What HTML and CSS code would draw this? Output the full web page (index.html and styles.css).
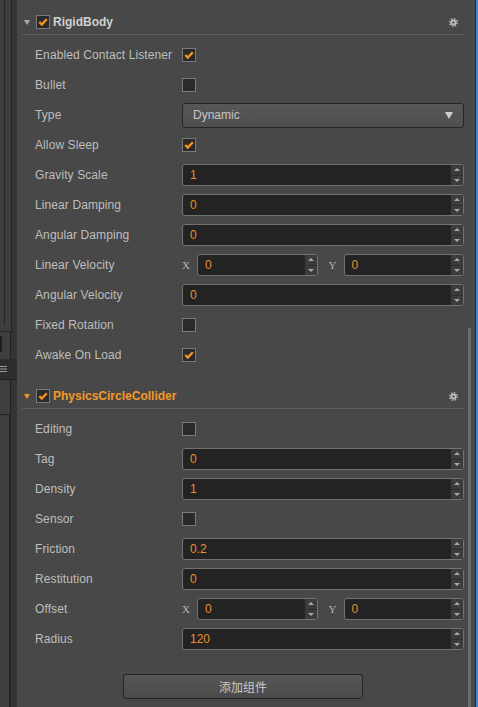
FILE: index.html
```html
<!DOCTYPE html>
<html>
<head>
<meta charset="utf-8">
<link rel="stylesheet" href="styles.css">
</head>
<body>
<div class="app">
  <div class="side">
    <div class="side-panel side-a"><div class="side-line"></div></div>
    <div class="side-panel side-b"><div class="side-block"></div></div>
    <div class="side-tool"><svg class="menu-ico" viewBox="0 0 7 8"><path d="M0 1.5H7M0 4H7M0 6.5H7"/></svg></div>
    <div class="side-panel side-c"><div class="side-inner"></div></div>
  </div>
  <div class="main">
    <div class="inspector">
      <div class="comp">
        <div class="comp-head">
          <span class="tri"></span>
          <span class="cb on"><svg viewBox="0 0 12 12"><polyline points="2.3,6 4.8,8.6 9.8,3.2"/></svg></span>
          <span class="comp-title">RigidBody</span>
          <svg class="gear" viewBox="0 0 9 9"><circle cx="4.5" cy="4.5" r="2.9"/><circle class="teeth" cx="4.5" cy="4.5" r="3.7"/><circle class="hole" cx="4.5" cy="4.5" r="1.1"/></svg>
        </div>
        <div class="comp-body">
          <div class="row"><span class="lbl">Enabled Contact Listener</span><span class="field"><span class="cb on"><svg viewBox="0 0 12 12"><polyline points="2.3,6 4.8,8.6 9.8,3.2"/></svg></span></span></div>
          <div class="row"><span class="lbl">Bullet</span><span class="field"><span class="cb"></span></span></div>
          <div class="row"><span class="lbl">Type</span><span class="field"><span class="select"><span>Dynamic</span><span class="caret"></span></span></span></div>
          <div class="row"><span class="lbl">Allow Sleep</span><span class="field"><span class="cb on"><svg viewBox="0 0 12 12"><polyline points="2.3,6 4.8,8.6 9.8,3.2"/></svg></span></span></div>
          <div class="row"><span class="lbl">Gravity Scale</span><span class="field"><span class="num"><span class="val">1</span><span class="spin"><i class="up"></i><i class="dn"></i></span></span></span></div>
          <div class="row"><span class="lbl">Linear Damping</span><span class="field"><span class="num"><span class="val">0</span><span class="spin"><i class="up"></i><i class="dn"></i></span></span></span></div>
          <div class="row"><span class="lbl">Angular Damping</span><span class="field"><span class="num"><span class="val">0</span><span class="spin"><i class="up"></i><i class="dn"></i></span></span></span></div>
          <div class="row"><span class="lbl">Linear Velocity</span><span class="field vec">
            <span class="half"><span class="axis">X</span><span class="num"><span class="val">0</span><span class="spin"><i class="up"></i><i class="dn"></i></span></span></span>
            <span class="half"><span class="axis">Y</span><span class="num"><span class="val">0</span><span class="spin"><i class="up"></i><i class="dn"></i></span></span></span>
          </span></div>
          <div class="row"><span class="lbl">Angular Velocity</span><span class="field"><span class="num"><span class="val">0</span><span class="spin"><i class="up"></i><i class="dn"></i></span></span></span></div>
          <div class="row"><span class="lbl">Fixed Rotation</span><span class="field"><span class="cb"></span></span></div>
          <div class="row"><span class="lbl">Awake On Load</span><span class="field"><span class="cb on"><svg viewBox="0 0 12 12"><polyline points="2.3,6 4.8,8.6 9.8,3.2"/></svg></span></span></div>
        </div>
      </div>
      <div class="comp">
        <div class="comp-head active">
          <span class="tri"></span>
          <span class="cb on"><svg viewBox="0 0 12 12"><polyline points="2.3,6 4.8,8.6 9.8,3.2"/></svg></span>
          <span class="comp-title">PhysicsCircleCollider</span>
          <svg class="gear" viewBox="0 0 9 9"><circle cx="4.5" cy="4.5" r="2.9"/><circle class="teeth" cx="4.5" cy="4.5" r="3.7"/><circle class="hole" cx="4.5" cy="4.5" r="1.1"/></svg>
        </div>
        <div class="comp-body last">
          <div class="row"><span class="lbl">Editing</span><span class="field"><span class="cb"></span></span></div>
          <div class="row"><span class="lbl">Tag</span><span class="field"><span class="num"><span class="val">0</span><span class="spin"><i class="up"></i><i class="dn"></i></span></span></span></div>
          <div class="row"><span class="lbl">Density</span><span class="field"><span class="num"><span class="val">1</span><span class="spin"><i class="up"></i><i class="dn"></i></span></span></span></div>
          <div class="row"><span class="lbl">Sensor</span><span class="field"><span class="cb"></span></span></div>
          <div class="row"><span class="lbl">Friction</span><span class="field"><span class="num"><span class="val">0.2</span><span class="spin"><i class="up"></i><i class="dn"></i></span></span></span></div>
          <div class="row"><span class="lbl">Restitution</span><span class="field"><span class="num"><span class="val">0</span><span class="spin"><i class="up"></i><i class="dn"></i></span></span></span></div>
          <div class="row"><span class="lbl">Offset</span><span class="field vec">
            <span class="half"><span class="axis">X</span><span class="num"><span class="val">0</span><span class="spin"><i class="up"></i><i class="dn"></i></span></span></span>
            <span class="half"><span class="axis">Y</span><span class="num"><span class="val">0</span><span class="spin"><i class="up"></i><i class="dn"></i></span></span></span>
          </span></div>
          <div class="row"><span class="lbl">Radius</span><span class="field"><span class="num"><span class="val">120</span><span class="spin"><i class="up"></i><i class="dn"></i></span></span></span></div>
        </div>
      </div>
      <div class="add-btn">添加组件</div>
    </div>
    <div class="scroll"><div class="thumb"></div></div>
  </div>
  <div class="edge"></div>
</div>
</body>
</html>
```
FILE: styles.css
```css
html, body {
  margin: 0;
  padding: 0;
  width: 478px;
  height: 707px;
  overflow: hidden;
  background: #484848;
  font-family: "Liberation Sans", Arial, "Noto Sans CJK SC", sans-serif;
  font-size: 12px;
}

.app {
  display: flex;
  height: 707px;
}

/* left partial panel */
.side {
  width: 17px;
  flex: none;
  display: flex;
  flex-direction: column;
  background: #343434;
}
.side-panel {
  width: 11px;
  background: #3e3e3e;
  border-right: 1px solid #222;
}
.side-a {
  height: 331px;
  border-bottom: 1px solid #222;
  display: flex;
}
.side-line {
  width: 4px;
  height: 326px;
  border-right: 1px solid #262626;
}
.side-b {
  height: 27px;
  padding-top: 4px;
  box-sizing: border-box;
}
.side-block {
  width: 2px;
  height: 16px;
  background: #1e1e1e;
}
.side-tool {
  height: 21px;
  width: 17px;
  background: #2d2d2d;
  border-bottom: 1px solid #222;
  box-sizing: border-box;
  display: flex;
  align-items: center;
}
.menu-ico {
  width: 7px;
  height: 8px;
  display: block;
}
.menu-ico path {
  stroke: #9a9a9a;
  stroke-width: 1;
  fill: none;
}
.side-c {
  flex: 1;
  padding-top: 34px;
  box-sizing: border-box;
}
.side-inner {
  width: 10px;
  height: 100%;
  border-top: 1px solid #222;
  border-right: 1px solid #262626;
  box-sizing: border-box;
}

/* main */
.main {
  flex: 1;
  display: flex;
  background: #484848;
}
.inspector {
  flex: 1;
  padding: 10px 0 0 5px;
}
.scroll {
  width: 11px;
  flex: none;
  padding: 328px 0 0 4px;
  box-sizing: border-box;
}
.thumb {
  width: 3px;
  height: 100%;
  background: #6c6c6c;
}
.edge {
  width: 2px;
  flex: none;
  border-left: 1px solid #2a2a2a;
  background: #3a88d8;
}

/* component header */
.comp-head {
  height: 24px;
  display: flex;
  align-items: center;
  border-bottom: 1px solid #5e5e5e;
  padding-left: 2px;
  padding-right: 6px;
}
.tri {
  width: 0;
  height: 0;
  border-left: 3px solid transparent;
  border-right: 3px solid transparent;
  border-top: 5px solid #a8a8a8;
  margin-right: 6px;
}
.comp-head.active .tri {
  border-top-color: #f0951f;
}
.comp-title {
  font-weight: bold;
  color: #d0d0d0;
  margin-left: 3px;
  flex: 1;
}
.comp-head.active .comp-title {
  color: #f39a26;
}
.gear {
  width: 9px;
  height: 9px;
  margin-top: 1px;
}
.gear circle {
  fill: #bdbdbd;
}
.gear .teeth {
  fill: none;
  stroke: #bdbdbd;
  stroke-width: 1.5;
  stroke-dasharray: 1.5 1.4;
}
.gear .hole {
  fill: #3a3a3a;
}

/* checkbox */
.cb {
  display: inline-block;
  width: 14px;
  height: 14px;
  box-sizing: border-box;
  border: 1px solid #7a7a7a;
  background: #2a2a2a;
  flex: none;
}
.cb svg {
  display: block;
  width: 12px;
  height: 12px;
}
.cb polyline {
  fill: none;
  stroke: #f4951c;
  stroke-width: 2.4;
}

/* rows */
.comp-body {
  padding: 5px 0 14px 13px;
}
.comp-body.last {
  padding-bottom: 0;
}
.row {
  height: 30px;
  display: grid;
  grid-template-columns: 147px 1fr;
  align-items: center;
}
.lbl {
  color: #bebebe;
  white-space: nowrap;
  letter-spacing: 0.1px;
}
.field {
  display: flex;
  align-items: center;
}
.field.vec {
  display: grid;
  grid-template-columns: 1fr 1fr;
  column-gap: 11px;
}
.half {
  display: flex;
  align-items: center;
}
.axis {
  width: 15px;
  flex: none;
  font-family: "Liberation Serif", "DejaVu Serif", serif;
  color: #b4b4b4;
  font-size: 11px;
  line-height: 22px;
}

/* number input */
.num {
  flex: 1;
  height: 22px;
  box-sizing: border-box;
  border: 1px solid #727272;
  border-radius: 3px;
  background: #232323;
  display: flex;
  overflow: hidden;
}
.val {
  flex: 1;
  color: #e8902e;
  padding-left: 7px;
  line-height: 20px;
}
.spin {
  width: 12px;
  flex: none;
  display: flex;
  flex-direction: column;
  background: #3c3c3c;
}
.spin i {
  flex: 1;
  display: flex;
  align-items: center;
  justify-content: center;
}
.spin .up {
  border-bottom: 1px solid #2e2e2e;
}
.spin .up::before {
  content: "";
  border-left: 3px solid transparent;
  border-right: 3px solid transparent;
  border-bottom: 3px solid #a8a8a8;
}
.spin .dn::before {
  content: "";
  border-left: 3px solid transparent;
  border-right: 3px solid transparent;
  border-top: 3px solid #a8a8a8;
}

/* dropdown */
.select {
  flex: 1;
  height: 25px;
  box-sizing: border-box;
  border: 1px solid #262626;
  border-radius: 3px;
  background: linear-gradient(#575757, #4f4f4f);
  display: flex;
  align-items: center;
  justify-content: space-between;
  padding: 0 10px 0 10px;
  color: #c6c6c6;
}
.caret {
  width: 0;
  height: 0;
  border-left: 4px solid transparent;
  border-right: 4px solid transparent;
  border-top: 7px solid #cfcfcf;
}

/* add component button */
.add-btn {
  width: 240px;
  height: 25px;
  box-sizing: border-box;
  margin: 20px auto 0;
  border: 1px solid #232323;
  border-radius: 3px;
  background: linear-gradient(#565656, #4b4b4b);
  color: #cacaca;
  text-align: center;
  line-height: 23px;
  font-family: "Noto Sans CJK SC", "Liberation Sans", sans-serif;
  font-size: 12px;
}
```
